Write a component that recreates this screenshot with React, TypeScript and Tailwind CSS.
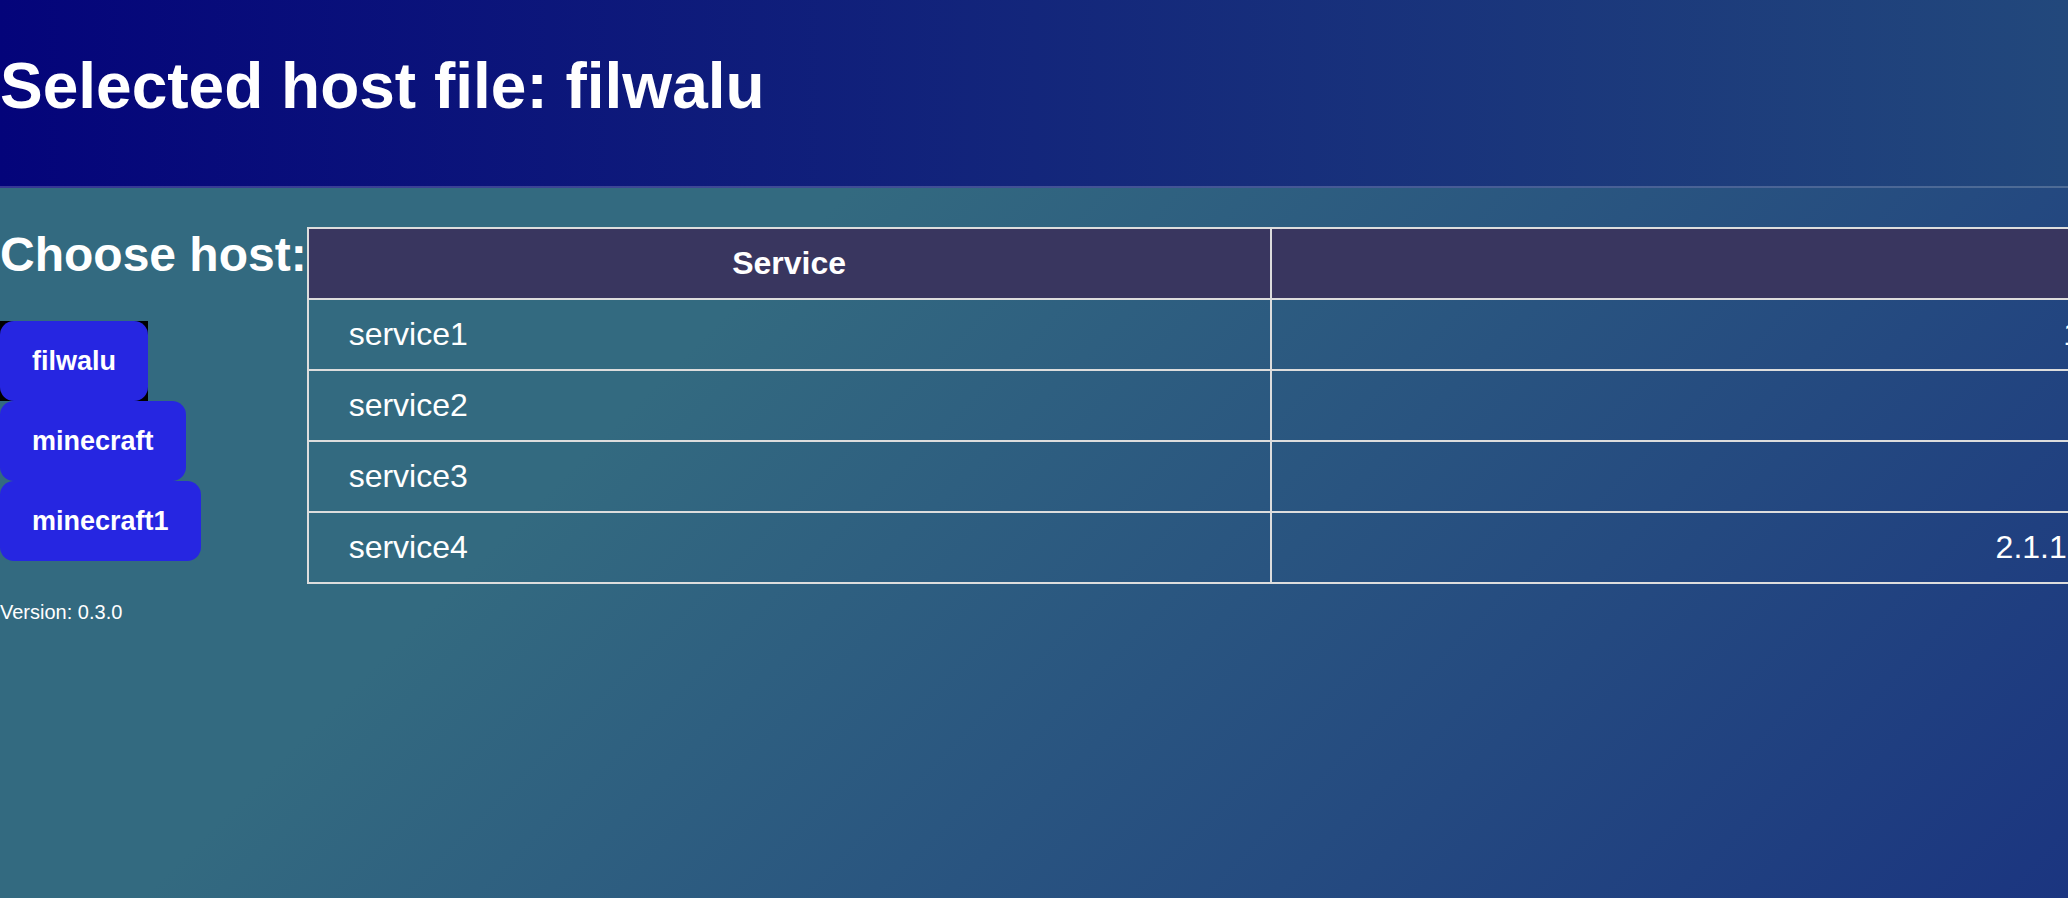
const hosts = ["filwalu", "minecraft", "minecraft1"]

const services = [
  { name: "service1", version: "1.20.4-beta" },
  { name: "service2", version: "1.0.0" },
  { name: "service3", version: "3.4.2" },
  { name: "service4", version: "2.1.1 (update 2.2.10)" },
]

export default function App() {
  const selected = "filwalu"

  return (
    <div className="h-screen w-full overflow-hidden bg-[linear-gradient(135deg,#336a80_35%,#1b3580)] font-['Liberation_Sans',Arial,sans-serif] leading-[normal] text-white">
      <header className="h-[188px] border-b-2 border-white/20 bg-[linear-gradient(to_right,#04047a,#22487c)] pt-[49px]">
        <h1 className="whitespace-nowrap text-[64px] font-bold">Selected host file: {selected}</h1>
      </header>

      <div className="flex items-start pt-[39px]">
        <div className="shrink-0">
          <h2 className="whitespace-nowrap text-[48px] font-bold">Choose host:</h2>
          <div className="mt-[39px] flex flex-col items-start">
            {hosts.map((h) =>
              h === selected ? (
                <div key={h} className="bg-black">
                  <button className="h-[80px] rounded-[14px] bg-[#2626e1] px-8 text-[27px] font-bold">{h}</button>
                </div>
              ) : (
                <button key={h} className="h-[80px] rounded-[14px] bg-[#2626e1] px-8 text-[27px] font-bold">{h}</button>
              )
            )}
          </div>
          <p className="mt-[40px] text-[20px]">Version: 0.3.0</p>
        </div>

        <table className="w-[2712px] shrink-0 table-fixed border-collapse border-2 border-[#dddddd] text-[32px]">
          <colgroup>
            <col className="w-[963px]" />
            <col />
          </colgroup>
          <thead className="bg-[#39365f]">
            <tr>
              <th className="border-2 border-[#dddddd] px-10 py-4 text-center font-bold">Service</th>
              <th className="border-2 border-[#dddddd] px-10 py-4 text-center font-bold">Version</th>
            </tr>
          </thead>
          <tbody>
            {services.map((s) => (
              <tr key={s.name}>
                <td className="border-2 border-[#dddddd] px-10 py-4 text-left">{s.name}</td>
                <td className="whitespace-nowrap border-2 border-[#dddddd] px-10 py-4 text-center">{s.version}</td>
              </tr>
            ))}
          </tbody>
        </table>
      </div>
    </div>
  )
}
